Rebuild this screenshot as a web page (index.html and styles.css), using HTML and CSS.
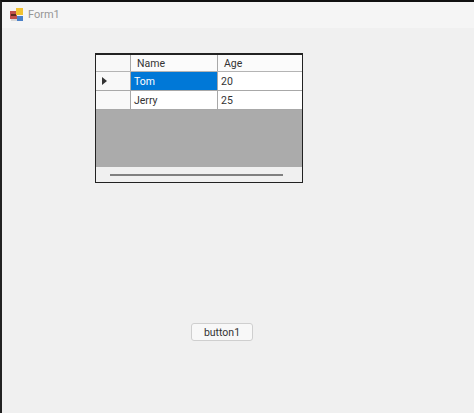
FILE: index.html
```html
<!DOCTYPE html>
<html lang="en">
<head>
    <meta charset="UTF-8">
    <title>Form1</title>
    <link rel="stylesheet" href="styles.css">
</head>
<body>
    <div class="window">
        <div class="titlebar">
            <svg class="app-icon" width="14" height="14" viewBox="0 0 14 14">
                <rect x="0" y="3" width="7" height="8" fill="#c0504d"/>
                <rect x="1" y="6" width="5" height="2" fill="#5a2a20"/>
                <rect x="6" y="0" width="7" height="7" fill="#f2c230"/>
                <rect x="7" y="8" width="6" height="5" fill="#4a80c8"/>
                <rect x="1" y="11" width="6" height="2" fill="#d8d8d8"/>
            </svg>
            <span class="title">Form1</span>
        </div>
        <div class="form">
            <div class="grid">
                <div class="row header-row">
                    <div class="row-head"></div>
                    <div class="cell col-name head-text">Name</div>
                    <div class="cell col-age head-text">Age</div>
                </div>
                <div class="row">
                    <div class="row-head"><span class="arrow"></span></div>
                    <div class="cell col-name selected">Tom</div>
                    <div class="cell col-age">20</div>
                </div>
                <div class="row">
                    <div class="row-head"></div>
                    <div class="cell col-name">Jerry</div>
                    <div class="cell col-age">25</div>
                </div>
                <div class="empty"></div>
                <div class="scrollbar"><div class="thumb"></div></div>
            </div>
            <button class="btn">button1</button>
        </div>
    </div>
</body>
</html>
```

FILE: styles.css
```css
html, body {
    margin: 0;
    padding: 0;
}
body {
    width: 474px;
    height: 413px;
    overflow: hidden;
    background: #f0f0f0;
    font-family: Roboto, "Liberation Sans", sans-serif;
    font-size: 10.5px;
    color: #333;
}
.window {
    height: 411px;
    border-top: 2px solid #111;
    border-left: 2px solid #222;
    display: flex;
    flex-direction: column;
}
.titlebar {
    height: 26px;
    flex: none;
    display: flex;
    align-items: center;
    gap: 4px;
    padding-left: 8px;
    background: #f5f5f5;
}
.app-icon {
    margin-bottom: 1px;
}
.title {
    font-size: 11px;
    color: #969696;
    margin-bottom: 1px;
}
.form {
    flex: 1;
    padding: 25px 0 0 93px;
    background: #f0f0f0;
}
.grid {
    width: 206px;
    height: 127px;
    border: 1px solid #222;
    border-top-width: 2px;
    background: #ababab;
    display: flex;
    flex-direction: column;
}
.row {
    display: flex;
    height: 19px;
    flex: none;
    background: #fff;
    border-bottom: 1px solid #a8a8a8;
    box-sizing: border-box;
}
.header-row {
    height: 17px;
    background: #fbfbfb;
    border-bottom-color: #b4b4b4;
}
.row-head {
    width: 35px;
    flex: none;
    background: #f8f8f8;
    border-right: 1px solid #a8a8a8;
    display: flex;
    align-items: center;
    padding-left: 6px;
    box-sizing: border-box;
}
.arrow {
    width: 0;
    height: 0;
    border-left: 5px solid #333;
    border-top: 4px solid transparent;
    border-bottom: 4px solid transparent;
}
.cell {
    line-height: 20px;
    padding-left: 3px;
    box-sizing: border-box;
}
.head-text {
    padding-left: 6px;
    line-height: 17px;
}
.col-name {
    width: 87px;
    border-right: 1px solid #a8a8a8;
}
.col-age {
    flex: 1;
}
.selected {
    background: #0078d7;
    color: #fff;
}
.empty {
    flex: 1;
}
.scrollbar {
    height: 15px;
    flex: none;
    background: #f0f0f0;
    display: flex;
    align-items: center;
    padding: 0 19px 0 14px;
}
.thumb {
    flex: 1;
    height: 2px;
    background: #808080;
}
.btn {
    display: block;
    width: 62px;
    height: 18px;
    margin: 140px 0 0 96px;
    padding: 0;
    background: #f8f8f8;
    border: 1px solid #cfcfcf;
    border-radius: 3px;
    font-family: inherit;
    font-size: 10.5px;
    color: #333;
}
```
